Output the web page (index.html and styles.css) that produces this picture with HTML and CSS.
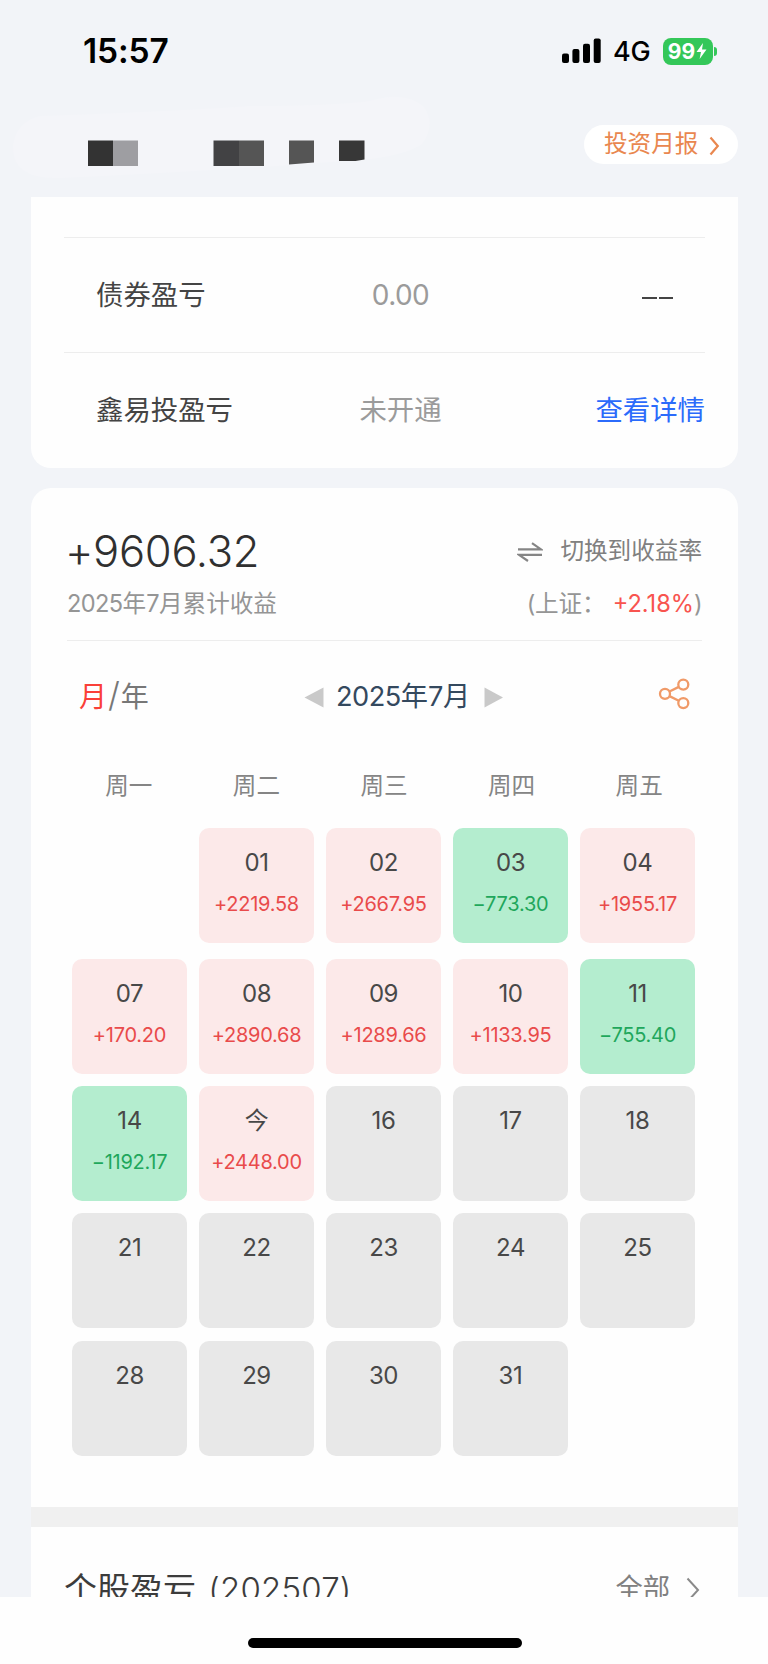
FILE: index.html
```html
<!DOCTYPE html>
<html lang="zh-CN">
<head>
<meta charset="utf-8">
<title>投资月报</title>
<link rel="stylesheet" href="styles.css">
</head>
<body>
<div class="screen">
  <header class="header">
    <div class="status">
      <span class="time">15:57</span>
      <div class="status-right">
        <svg class="signal" width="40" height="26" viewBox="0 0 40 26">
          <rect x="0" y="15.5" width="7" height="9.5" rx="2"/><rect x="10.4" y="11" width="7" height="14" rx="2"/><rect x="21" y="5.8" width="7" height="19.2" rx="2"/><rect x="31.7" y="0.4" width="7" height="24.6" rx="2"/>
        </svg>
        <span class="network">4G</span>
        <div class="battery"><span>99</span><svg width="11" height="16" viewBox="0 0 11 16"><path d="M7 0 0.5 9H5L3.6 16 10.5 6.6H6Z" fill="#fff"/></svg></div>
        <i class="nub"></i>
      </div>
    </div>
    <div class="title-row">
      <svg class="mask" width="450" height="90" viewBox="0 0 450 90">
        <path d="M40 22Q180 17 250 12Q330 12 370 7Q405 -4 424 13Q436 31 422 50Q405 62 360 66Q200 78 60 84Q12 86 13 52Q16 28 40 22Z" fill="#f4f5f9"/>
        <path d="M88 46.500h25v25.500h-25z" fill="#333"/><path d="M113 46.500h25v25.500h-25z" fill="#9e9ea2"/>
        <path d="M213.500 46.500h25.500v25.500h-25.500z" fill="#424244"/><path d="M239 46.500h25v25.500h-25z" fill="#555"/>
        <path d="M289 46.500h25v22l-25 2z" fill="#555"/><path d="M339 46.500h25.500v19l-9 1.500h-16.500z" fill="#373737"/>
      </svg>
      <div class="report"><span>投资月报</span><svg width="11" height="20" viewBox="0 0 11 20"><path d="M1.500 1.500 8.800 10 1.500 18.500" fill="none" stroke="#e9874f" stroke-width="2.200"/></svg></div>
    </div>
  </header>

  <main class="content">
    <section class="card summary">
      <div class="row"><span class="name">债券盈亏</span><span class="value num">0.00</span><span class="dash"><i></i><i></i></span></div>
      <div class="row"><span class="name">鑫易投盈亏</span><span class="value">未开通</span><span class="link">查看详情</span></div>
    </section>

    <section class="card profit">
      <div class="totals">
        <div class="line big"><span class="total">+9606.32</span>
          <span class="switch"><svg width="26" height="20" viewBox="0 0 26 20"><path d="M1 7.400H24L15 1.200M25 12.800H2L11 19" fill="none" stroke="#858585" stroke-width="2.200"/></svg>切换到收益率</span></div>
        <div class="line small"><span class="caption"><b>2025</b>年<b>7</b>月累计收益</span><span class="index"><b class="paren">(</b>上证：<em>+2.18%</em><b class="paren">)</b></span></div>
      </div>
      <div class="picker">
        <span class="mode"><em>月</em><i>/</i>年</span>
        <div class="month"><svg width="20" height="21" viewBox="0 0 20 21"><path d="M19.500 0.500V20.500L0.500 10.500Z" fill="#c9c9c9"/></svg><span><b>2025</b>年<b>7</b>月</span><svg class="next" width="20" height="21" viewBox="0 0 20 21"><path d="M0.500 0.500V20.500L19 10.500Z" fill="#c9c9c9"/></svg></div>
        <svg class="share" width="32" height="32" viewBox="0 0 32 32" fill="none" stroke="#f09a68" stroke-width="2.300"><circle cx="7" cy="15.800" r="5"/><circle cx="25.300" cy="6.600" r="5"/><circle cx="25.300" cy="25.100" r="5"/><path d="M11.500 13.500 20.800 8.900M11.500 18.100 20.800 22.800"/></svg>
      </div>
      <div class="weekdays"><span>周一</span><span>周二</span><span>周三</span><span>周四</span><span>周五</span></div>
      <div class="days first">
        <div></div>
        <div class="day up"><b>01</b><span>+2219.58</span></div>
        <div class="day up"><b>02</b><span>+2667.95</span></div>
        <div class="day down"><b>03</b><span>−773.30</span></div>
        <div class="day up"><b>04</b><span>+1955.17</span></div>
      </div>
      <div class="days">
        <div class="day up"><b>07</b><span>+170.20</span></div>
        <div class="day up"><b>08</b><span>+2890.68</span></div>
        <div class="day up"><b>09</b><span>+1289.66</span></div>
        <div class="day up"><b>10</b><span>+1133.95</span></div>
        <div class="day down"><b>11</b><span>−755.40</span></div>
        <div class="day down"><b>14</b><span>−1192.17</span></div>
        <div class="day up"><b>今</b><span>+2448.00</span></div>
        <div class="day"><b>16</b></div>
        <div class="day"><b>17</b></div>
        <div class="day"><b>18</b></div>
        <div class="day"><b>21</b></div>
        <div class="day"><b>22</b></div>
        <div class="day"><b>23</b></div>
        <div class="day"><b>24</b></div>
        <div class="day"><b>25</b></div>
        <div class="day"><b>28</b></div>
        <div class="day"><b>29</b></div>
        <div class="day"><b>30</b></div>
        <div class="day"><b>31</b></div>
      </div>
    </section>

    <section class="stocks">
      <h2>个股盈亏 <b>(202507)</b></h2>
      <div class="all"><span>全部</span><svg width="14" height="26" viewBox="0 0 14 26"><path d="M1.500 1.500 12 13 1.500 24.500" fill="none" stroke="#8a8a8a" stroke-width="2"/></svg></div>
    </section>
  </main>
  <footer class="home"><i></i></footer>
</div>
</body>
</html>
```
FILE: styles.css
```css
* { box-sizing: border-box; }
body { margin: 0; background: #f2f4f8; font-family: Inter, "Noto Sans CJK SC", sans-serif; color: #444; }
b, em, i, h2 { font-weight: inherit; font-style: normal; margin: 0; }
svg { display: block; flex: none; }
.screen { width: 768px; height: 1664px; display: flex; flex-direction: column; overflow: hidden; white-space: nowrap; }

.header { height: 197px; flex: none; }
.status { height: 94px; padding: 8px 51px 0 83px; display: flex; justify-content: space-between; line-height: 87px; color: #000; }
.time { font-size: 33.500px; font-weight: 600; letter-spacing: -0.1px; }
.status-right { display: flex; align-items: center; }
.network { font-size: 27px; font-weight: 500; margin-left: 11px; width: 49.500px; letter-spacing: -0.3px; }
.battery { width: 50px; height: 27px; border-radius: 8px; background: #34c759; display: flex; align-items: center; justify-content: center; color: #fff; font-size: 21px; font-weight: 700; line-height: 27px; gap: 1px; }
.nub { width: 3px; height: 9px; margin-left: 1.500px; border-radius: 0 3px 3px 0; background: #34c759; }
.title-row { display: flex; justify-content: space-between; }
.report { width: 154px; height: 39px; margin: 31px 30px 0 0; border-radius: 20px; background: #fff; padding-left: 20px; display: flex; align-items: center; font-size: 23.600px; line-height: 38px; color: #e9874f; }
.report span { height: 39px; }
.report svg { margin-left: 11px; margin-top: 2px; }

.content { flex: none; height: 1400px; width: 707px; margin-left: 31px; overflow: hidden; }
.card { background: #fefefe; }
.summary { height: 271px; padding: 40px 33px 0; border-radius: 0 0 20px 20px; }
.row { height: 115px; border-top: 1px solid #ededed; display: grid; grid-template-columns: 1fr 1fr 1fr; line-height: 115px; font-size: 27.400px; }
.name { padding-left: 32px; }
.value { text-align: center; color: #9b9b9b; padding-left: 32px; }
.value.num { font-weight: 400; font-size: 28px; letter-spacing: -0.6px; }
.link { text-align: right; color: #2b6bfb; }
.dash { display: flex; gap: 2px; align-items: center; justify-content: flex-end; padding: 4px 32px 0 0; }
.dash i { width: 14.500px; height: 2px; background: #444; }

.profit { height: 1019px; margin-top: 20px; border-radius: 20px 20px 0 0; padding-top: 33px; }
.totals { margin: 0 36px; height: 120px; border-bottom: 1px solid #ededed; }
.line { display: flex; justify-content: space-between; }
.big { height: 60px; line-height: 60px; }
.total { font-size: 43.500px; font-weight: 350; color: #303030; letter-spacing: -0.3px; margin-left: -2px; }
.switch { display: flex; align-items: center; gap: 17px; font-size: 23.600px; color: #808080; }
.switch svg { margin-top: 1px; }
.small { height: 46px; line-height: 46px; font-size: 23.600px; color: #959595; }
.small b { font-weight: 400; letter-spacing: -0.6px; }
.index em { color: #f8544f; letter-spacing: 0; margin-left: 7px; }
.picker { height: 112px; display: grid; grid-template-columns: 273px 1fr 80px; align-items: start; line-height: 112px; font-size: 28px; color: #777; }
.mode { padding-left: 48px; }
.mode em { color: #fa4038; }
.mode i { font-size: 34px; font-weight: 300; margin: 0 1px; line-height: 1; }
.month { display: flex; align-items: center; gap: 12px; color: #34495e; font-size: 27.200px; }
.month b { letter-spacing: -0.5px; }
.month .next { margin-left: 2px; }
.share { margin-top: 37px; }
.weekdays { padding: 0 35px 0 34px; display: grid; grid-template-columns: repeat(5, 1fr); text-align: center; font-size: 23.600px; line-height: 65px; height: 75px; color: #858585; }
.days { margin-left: 41px; display: grid; grid-template-columns: repeat(5, 115px); grid-auto-rows: 115px; gap: 12.200px 12px; }
.first { margin-bottom: 16px; }
.day { border-radius: 10px; background: #e8e8e8; text-align: center; display: flex; flex-direction: column; padding-top: 18px; }
.day b { font-size: 24px; line-height: 33px; color: #484848; letter-spacing: -0.4px; }
.day span { font-size: 20px; line-height: 30px; margin-top: 10px; letter-spacing: -0.25px; }
.up { background: #fce9e9; }
.up span { color: #e94b4b; }
.down { background: #b4edcf; }
.down span { color: #1fa75c; }

.stocks { height: 91px; border-top: 20px solid #f0f0f0; background: #fefefe; padding: 32px 38px 0 33px; display: flex; justify-content: space-between; line-height: 60px; }
.stocks h2 { font-size: 33px; color: #3c3c3c; }
.stocks h2 b { font-weight: 350; margin-left: 3px; letter-spacing: 0.2px; }
.all { display: flex; gap: 16px; font-size: 27.300px; color: #808080; }
.all svg { margin-top: 18px; }
.home { flex: 1; background: #fefefe; display: flex; justify-content: center; padding: 41px 0 0 2px; }
.home i { width: 274px; height: 10px; border-radius: 5px; background: #000; }
```
